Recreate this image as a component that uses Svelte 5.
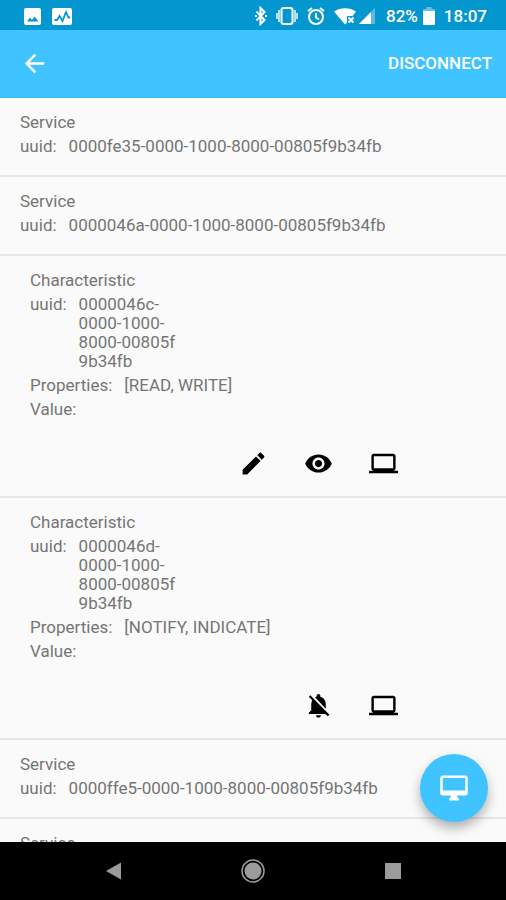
<script lang="ts">
	interface Service {
		kind: 'service';
		uuid: string;
	}

	interface Characteristic {
		kind: 'characteristic';
		uuid: string;
		properties: string[];
		value: string;
		actions: IconName[];
	}

	type IconName = 'write' | 'read' | 'notify' | 'display';

	const icons: Record<IconName, { label: string; path: string }> = {
		write: {
			label: 'Write value',
			path: 'M3 17.25V21h3.75L17.81 9.94l-3.75-3.75L3 17.25zM20.71 7.04c.39-.39.39-1.02 0-1.41l-2.34-2.34c-.39-.39-1.02-.39-1.41 0l-1.83 1.83 3.75 3.75 1.83-1.83z'
		},
		read: {
			label: 'Read value',
			path: 'M12 4.5C7 4.5 2.73 7.61 1 12c1.73 4.39 6 7.5 11 7.5s9.27-3.11 11-7.5c-1.73-4.39-6-7.5-11-7.5zM12 17c-2.76 0-5-2.24-5-5s2.24-5 5-5 5 2.24 5 5-2.24 5-5 5zm0-8c-1.66 0-3 1.34-3 3s1.34 3 3 3 3-1.34 3-3-1.34-3-3-3z'
		},
		notify: {
			label: 'Toggle notifications',
			path: 'M20 18.69L7.84 6.14 5.27 3.49 4 4.76l2.8 2.8v.01c-.52.99-.8 2.16-.8 3.42v5l-2 2v1h13.73l2 2L21 19.72l-1-1.03zM12 22c1.11 0 2-.89 2-2h-4c0 1.11.89 2 2 2zm6-7.32V11c0-3.08-1.64-5.64-4.5-6.32V4c0-.83-.67-1.5-1.5-1.5s-1.5.67-1.5 1.5v.68c-.15.03-.29.08-.42.12-.1.03-.2.07-.3.11h-.01c-.01 0-.01 0-.02.01-.23.09-.46.2-.68.31 0 0-.01 0-.01.01L18 14.68z'
		},
		display: {
			label: 'Show on display',
			path: 'M20 18c1.1 0 1.99-.9 1.99-2L22 6c0-1.1-.9-2-2-2H4c-1.1 0-2 .9-2 2v10c0 1.1.9 2 2 2H0v2h24v-2h-4zM4 6h16v10H4V6z'
		}
	};

	// uuids of characteristics carry their own line breaks
	const items: (Service | Characteristic)[] = [
		{ kind: 'service', uuid: '0000fe35-0000-1000-8000-00805f9b34fb' },
		{ kind: 'service', uuid: '0000046a-0000-1000-8000-00805f9b34fb' },
		{
			kind: 'characteristic',
			uuid: '0000046c-\n0000-1000-\n8000-00805f\n9b34fb',
			properties: ['READ', 'WRITE'],
			value: '',
			actions: ['write', 'read', 'display']
		},
		{
			kind: 'characteristic',
			uuid: '0000046d-\n0000-1000-\n8000-00805f\n9b34fb',
			properties: ['NOTIFY', 'INDICATE'],
			value: '',
			actions: ['notify', 'display']
		},
		{ kind: 'service', uuid: '0000ffe5-0000-1000-8000-00805f9b34fb' },
		{ kind: 'service', uuid: '' }
	];
</script>

<div class="screen">
	<div class="status-bar">
		<div class="notifications">
			<svg width="17" height="17" viewBox="0 0 17 17">
				<rect width="17" height="17" rx="2" fill="#fff" />
				<path d="M3 13.500l3-4 2 2.500 2.500-3.500 4 5z" fill="#0497cf" />
			</svg>
			<svg width="20" height="17" viewBox="0 0 20 17">
				<rect width="20" height="17" rx="2" fill="#fff" />
				<path d="M2.500 12H5l2.500-4 3 5L14 4l2.500 5.500H18" fill="none" stroke="#0497cf" stroke-width="1.800" />
			</svg>
		</div>
		<div class="system">
			<svg width="12" height="20" viewBox="0 0 12 20">
				<path d="M1.500 5.500l8 8.500-4 4V2l4 4-8 8.500" fill="none" stroke="#fff" stroke-width="2" />
				<path d="M0 9h2v2H0zM10 9h2v2h-2z" fill="#fff" />
			</svg>
			<svg width="22" height="20" viewBox="0 0 22 20">
				<rect x="5.500" y="2" width="11" height="16" rx="2" fill="none" stroke="#fff" stroke-width="2" />
				<path d="M3 4v12M19 4v12M1 7v6M21 7v6" stroke="#fff" stroke-opacity=".7" stroke-width="2" />
			</svg>
			<svg width="18" height="20" viewBox="0 0 18 20">
				<circle cx="9" cy="11" r="7" fill="none" stroke="#fff" stroke-width="2" />
				<path d="M9 7v4.500l3 2M1 5l4-3M17 5l-4-3" fill="none" stroke="#fff" stroke-width="2" />
			</svg>
			<svg class="wifi" width="22" height="20" viewBox="0 0 22 20">
				<path d="M0 5.500C6 1 16 1 22 5.500L18.500 10H13v6.500l-2 2z" fill="#fff" />
				<path d="M14.500 11.500l5 5M19.500 11.500l-5 5" stroke="#fff" stroke-width="2" />
			</svg>
			<svg width="16" height="20" viewBox="0 0 16 20">
				<path d="M0 18L16 2v16z" fill="#fff" fill-opacity=".35" />
				<path d="M0 18L12 6v12z" fill="#fff" />
			</svg>
			<span class="percent">82%</span>
			<svg width="12" height="20" viewBox="0 0 12 20">
				<path d="M3.500 1h5v2H11q1 0 1 1v3H0V4q0-1 1-1h2.500z" fill="#fff" fill-opacity=".4" />
				<path d="M0 5h12v13q0 1-1 1H1q-1 0-1-1z" fill="#fff" />
			</svg>
			<span>18:07</span>
		</div>
	</div>

	<header class="toolbar">
		<button class="back" aria-label="Back">
			<svg width="29" height="29" viewBox="0 0 24 24">
				<path d="M20 11H7.830l5.590-5.590L12 4l-8 8 8 8 1.410-1.410L7.830 13H20v-2z" fill="currentColor" />
			</svg>
		</button>
		<button class="disconnect">DISCONNECT</button>
	</header>

	<main class="content">
		<ul class="list">
			{#each items as item}
				<li class="item {item.kind}">
					{#if item.kind === 'service'}
						<span>Service</span>
						{#if item.uuid}
							<div class="field">
								<span>uuid:</span>
								<span>{item.uuid}</span>
							</div>
						{/if}
					{:else}
						<span>Characteristic</span>
						<div class="field">
							<span>uuid:</span>
							<span class="lines">{item.uuid}</span>
						</div>
						<div class="field">
							<span>Properties:</span>
							<span>[{item.properties.join(', ')}]</span>
						</div>
						<div class="field">
							<span>Value:</span>
							<span>{item.value}</span>
						</div>
						<div class="actions">
							{#each item.actions as action}
								<button class="action" aria-label={icons[action].label}>
									<svg width="29" height="29" viewBox="0 0 24 24">
										<path d={icons[action].path} fill="currentColor" />
									</svg>
								</button>
							{/each}
						</div>
					{/if}
				</li>
			{/each}
		</ul>
		<button class="fab" aria-label="Open display">
			<svg width="30" height="30" viewBox="0 0 24 24">
				<path
					d="M21 2H3c-1.100 0-2 .9-2 2v12c0 1.100.9 2 2 2h7l-2 3v1h8v-1l-2-3h7c1.100 0 2-.9 2-2V4c0-1.100-.9-2-2-2zm0 12H3V4h18v10z"
					fill="currentColor"
				/>
			</svg>
		</button>
	</main>

	<nav class="nav-bar">
		<button aria-label="Back">
			<svg width="24" height="24" viewBox="0 0 24 24">
				<path d="M5 12L20 3.500v17z" fill="#9b9b9b" />
			</svg>
		</button>
		<button aria-label="Home">
			<svg width="24" height="24" viewBox="0 0 24 24">
				<circle cx="12" cy="12" r="11" fill="none" stroke="#9b9b9b" stroke-width="1.500" />
				<circle cx="12" cy="12" r="8.500" fill="#9b9b9b" />
			</svg>
		</button>
		<button aria-label="Recent apps">
			<svg width="24" height="24" viewBox="0 0 24 24">
				<path d="M4 4h16v16H4z" fill="#9b9b9b" />
			</svg>
		</button>
	</nav>
</div>

<style>
	:global(body) {
		margin: 0;
	}

	.screen {
		display: flex;
		flex-direction: column;
		height: 100vh;
		background-color: #fafafa;
		color: #757575;
		font-family: Roboto, sans-serif;
		font-size: 17px;
		line-height: 19px;
	}

	svg {
		display: block;
		flex: none;
	}

	button {
		display: flex;
		align-items: center;
		justify-content: center;
		padding: 0;
		border: none;
		background: none;
		color: inherit;
		font: inherit;
		cursor: pointer;
	}

	.status-bar {
		display: flex;
		align-items: center;
		justify-content: space-between;
		flex: none;
		box-sizing: border-box;
		height: 30px;
		padding: 2px 19px 0 24px;
		background-color: #0497cf;
		color: #fff;
		font-weight: 500;
	}

	.notifications,
	.system {
		display: flex;
		align-items: center;
	}

	.notifications {
		gap: 11px;
	}

	.system {
		gap: 9px;
	}

	.wifi {
		margin-right: -6px;
	}

	.percent {
		margin: 0 -4px 0 2px;
	}

	.toolbar {
		display: flex;
		align-items: center;
		justify-content: space-between;
		flex: none;
		box-sizing: border-box;
		height: 68px;
		padding: 0 14px 0 20px;
		border-bottom: 1px solid #35b8ef;
		background-color: #40c4ff;
		color: #fff;
	}

	.disconnect {
		height: 48px;
		font-weight: 500;
	}

	.content {
		position: relative;
		flex: 1;
		min-height: 0;
	}

	.list {
		height: 100%;
		margin: 0;
		padding: 0;
		overflow-y: auto;
		scrollbar-width: none;
		list-style: none;
	}

	.item {
		display: flex;
		flex-direction: column;
		gap: 5px;
		padding: 15px 20px 19px;
		border-bottom: 2px solid #e6e6e6;
	}

	.characteristic {
		padding: 15px 30px 9px;
	}

	.field {
		display: flex;
		gap: 12px;
	}

	.lines {
		white-space: pre-line;
	}

	.actions {
		display: flex;
		justify-content: flex-end;
		margin-top: 15px;
		padding-right: 60px;
	}

	.action {
		width: 65px;
		height: 48px;
		color: #000;
	}

	.fab {
		position: absolute;
		right: 18px;
		bottom: 20px;
		width: 68px;
		height: 68px;
		border-radius: 50%;
		background-color: #40c4ff;
		color: #fff;
		box-shadow: 0 6px 12px rgba(0, 0, 0, 0.3);
	}

	.nav-bar {
		display: flex;
		justify-content: center;
		flex: none;
		height: 58px;
		background-color: #000;
	}

	.nav-bar button {
		width: 140px;
	}
</style>
